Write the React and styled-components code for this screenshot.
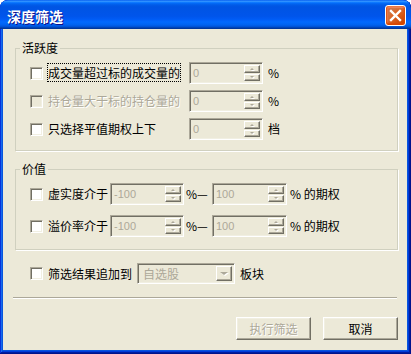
import React from 'react';
import styled, { createGlobalStyle } from 'styled-components';

const Global = createGlobalStyle`
  html, body { margin: 0; padding: 0; background: #fff; }
  body {
    font-family: "Noto Sans CJK SC", "Liberation Sans", sans-serif;
    font-size: 12px;
  }
  #root { width: 411px; height: 354px; }
`;

const Frame = styled.div`
  width: 411px;
  height: 354px;
  box-sizing: border-box;
  display: flex;
  flex-direction: column;
  background: #0855dd;
  border-radius: 8px 8px 0 0;
  overflow: hidden;
  box-shadow: inset -1px -1px #00138c, inset 1px 1px #0831d9,
    inset -2px -2px #001ea0, inset 2px 2px #166aee,
    inset -3px -3px #003bda, inset 3px 3px #0855dd;
`;

const TitleBar = styled.div`
  height: 29px;
  flex: none;
  display: flex;
  align-items: center;
  justify-content: space-between;
  padding: 0 5px 0 7px;
  background: linear-gradient(
    180deg,
    #0058ee 0%,
    #3593ff 4%,
    #288eff 6%,
    #127dff 8%,
    #036ffc 10%,
    #0262ee 14%,
    #0057e5 20%,
    #0054e3 24%,
    #0055eb 56%,
    #005bf5 66%,
    #026afe 76%,
    #0062ef 86%,
    #0052d6 92%,
    #0040ab 96%,
    #003092 100%
  );
  border-radius: 8px 8px 0 0;
`;

const Title = styled.span`
  color: #fff;
  font-weight: bold;
  font-size: 14px;
  line-height: 16px;
  padding-top: 2px;
  text-shadow: 1px 1px #0f1089;
`;

const CloseButton = styled.div`
  width: 21px;
  height: 21px;
  box-sizing: border-box;
  margin-top: 2px;
  border: 1px solid #fff;
  border-radius: 3px;
  background: radial-gradient(circle at 90% 90%, #cc4600 0%, #dc6527 55%, #cd7546 70%, #e2603a 100%);
  box-shadow: inset 0 -1px 2px 1px #da4600, inset 1px 1px 1px 1px #f08a60;
  display: flex;
  align-items: center;
  justify-content: center;
`;

const Client = styled.div`
  flex: 1;
  margin: 0 4px 4px 3px;
  background: #ece9d8;
  display: flex;
  flex-direction: column;
`;

const Group = styled.fieldset`
  margin: ${(p) => p.$mt}px 9px 0 12px;
  padding: 7px 0 ${(p) => p.$pb}px 14px;
  border: 1px solid #d0d0bf;
  border-radius: 0;
  box-shadow: 1px 1px 0 #fff;
  min-width: 0;
  display: flex;
  flex-direction: column;
  gap: ${(p) => p.$gap}px;
`;

const Legend = styled.legend`
  padding: 0 2px;
  margin-left: -10px;
  line-height: 14px;
  color: #000;
`;

const Row = styled.div`
  display: flex;
  align-items: center;
  height: ${(p) => p.$h || 22}px;
  margin: ${(p) => p.$m || '0'};
`;

const Check = styled.span`
  width: 13px;
  height: 13px;
  box-sizing: border-box;
  flex: none;
  border: 1px solid;
  border-color: #aca899 #fff #fff #aca899;
  box-shadow: inset 1px 1px #716f64, inset -1px -1px #f1efe2;
  background: ${(p) => (p.$disabled ? '#ece9d8' : '#fff')};
  margin-right: 5px;
`;

const Text = styled.span`
  flex: none;
  width: ${(p) => (p.$w ? `${p.$w}px` : 'auto')};
  margin-left: ${(p) => p.$ml || 0}px;
  margin-right: ${(p) => p.$mr || 0}px;
  color: ${(p) => (p.$disabled ? '#aca899' : '#000')};
  text-shadow: ${(p) => (p.$disabled ? '1px 1px #fff' : 'none')};
  white-space: nowrap;
  line-height: 14px;
`;

const Focus = styled.span`
  outline: 1px dotted #000;
  outline-offset: 0px;
`;

const SunkenBox = styled.div`
  width: ${(p) => p.$w}px;
  height: ${(p) => p.$h || 22}px;
  box-sizing: border-box;
  flex: none;
  display: flex;
  border: 1px solid;
  border-color: #aca899 #fff #fff #aca899;
  box-shadow: inset 1px 1px #716f64, inset -1px -1px #f1efe2;
  padding: 2px;
  background: #ece9d8;
`;

const FieldValue = styled.span`
  flex: 1;
  color: #aca899;
  line-height: 14px;
  padding: 1px 0 0 1px;
  font-family: "Liberation Sans", "Noto Sans CJK SC", sans-serif;
  font-size: 11px;
`;

const ComboValue = styled.span`
  flex: 1;
  color: #aca899;
  line-height: 14px;
  padding: 1px 0 0 3px;
  font-family: "Noto Sans CJK SC", sans-serif;
  font-size: 12px;
`;

const SpinButtons = styled.div`
  width: 16px;
  flex: none;
  display: flex;
  flex-direction: column;
  gap: 1px;
`;

const RaisedBtn = styled.div`
  flex: ${(p) => (p.$w ? 'none' : '1')};
  box-sizing: border-box;
  border: 1px solid;
  border-color: #fff #716f64 #716f64 #fff;
  box-shadow: inset -1px -1px #aca899;
  background: #ece9d8;
  display: flex;
  align-items: center;
  justify-content: center;
  width: ${(p) => (p.$w ? `${p.$w}px` : 'auto')};
`;

const Arrow = styled.span`
  width: 0;
  height: 0;
  border-left: ${(p) => p.$s}px solid transparent;
  border-right: ${(p) => p.$s}px solid transparent;
  ${(p) => (p.$up ? 'border-bottom' : 'border-top')}: ${(p) => p.$h}px solid #aca899;
  filter: drop-shadow(1px 1px 0 #fff);
`;

const Separator = styled.div`
  height: 1px;
  margin: 13px 10px 0 10px;
  background: #aca899;
  border-bottom: 1px solid #fff;
`;

const ButtonRow = styled.div`
  display: flex;
  justify-content: flex-end;
  gap: 12px;
  margin-top: 18px;
  padding-right: 9px;
`;

const Button = styled.div`
  width: 75px;
  height: 23px;
  box-sizing: border-box;
  border: 1px solid;
  border-color: #fff #716f64 #716f64 #fff;
  box-shadow: inset -1px -1px #aca899, inset 1px 1px #f1efe2;
  background: #ece9d8;
  display: flex;
  align-items: center;
  justify-content: center;
  line-height: 14px;
  color: ${(p) => (p.$disabled ? '#aca899' : '#000')};
  text-shadow: ${(p) => (p.$disabled ? '1px 1px #fff' : 'none')};
`;

function Spin({ w, value }) {
  return (
    <SunkenBox $w={w}>
      <FieldValue>{value}</FieldValue>
      <SpinButtons>
        <RaisedBtn>
          <Arrow $up $s={2} $h={2} />
        </RaisedBtn>
        <RaisedBtn>
          <Arrow $s={2} $h={2} />
        </RaisedBtn>
      </SpinButtons>
    </SunkenBox>
  );
}

function Combo({ w, value }) {
  return (
    <SunkenBox $w={w} $h={21}>
      <ComboValue>{value}</ComboValue>
      <RaisedBtn $w={16}>
        <Arrow $s={4} $h={3} />
      </RaisedBtn>
    </SunkenBox>
  );
}

export default function App() {
  return (
    <>
      <Global />
      <Frame>
        <TitleBar>
          <Title>深度筛选</Title>
          <CloseButton>
            <svg width="13" height="13" viewBox="0 0 13 13">
              <path d="M2 2 L11 11 M11 2 L2 11" stroke="#fff" strokeWidth="2.4" strokeLinecap="square" />
            </svg>
          </CloseButton>
        </TitleBar>
        <Client>
          <Group $mt={12} $pb={10} $gap={6}>
            <Legend>活跃度</Legend>
            <Row>
              <Check />
              <Text $w={136} $mr={5}>
                <Focus>成交量超过标的成交量的</Focus>
              </Text>
              <Spin w={74} value="0" />
              <Text $ml={5}>%</Text>
            </Row>
            <Row>
              <Check $disabled />
              <Text $w={136} $mr={5} $disabled>
                持仓量大于标的持仓量的
              </Text>
              <Spin w={74} value="0" />
              <Text $ml={5}>%</Text>
            </Row>
            <Row>
              <Check />
              <Text $w={136} $mr={5}>
                只选择平值期权上下
              </Text>
              <Spin w={74} value="0" />
              <Text $ml={5}>档</Text>
            </Row>
          </Group>
          <Group $mt={11} $pb={12} $gap={10}>
            <Legend>价值</Legend>
            <Row>
              <Check />
              <Text $w={60} $mr={2}>
                虚实度介于
              </Text>
              <Spin w={74} value="-100" />
              <Text $w={26} $ml={2}>
                %—
              </Text>
              <Spin w={75} value="100" />
              <Text $ml={3}>% 的期权</Text>
            </Row>
            <Row>
              <Check />
              <Text $w={60} $mr={2}>
                溢价率介于
              </Text>
              <Spin w={74} value="-100" />
              <Text $w={26} $ml={2}>
                %—
              </Text>
              <Spin w={75} value="100" />
              <Text $ml={3}>% 的期权</Text>
            </Row>
          </Group>
          <Row $h={21} $m="13px 0 0 27px">
            <Check />
            <Text $w={84} $mr={5}>
              筛选结果追加到
            </Text>
            <Combo w={98} value="自选股" />
            <Text $ml={5}>板块</Text>
          </Row>
          <Separator />
          <ButtonRow>
            <Button $disabled>执行筛选</Button>
            <Button>取消</Button>
          </ButtonRow>
        </Client>
      </Frame>
    </>
  );
}
